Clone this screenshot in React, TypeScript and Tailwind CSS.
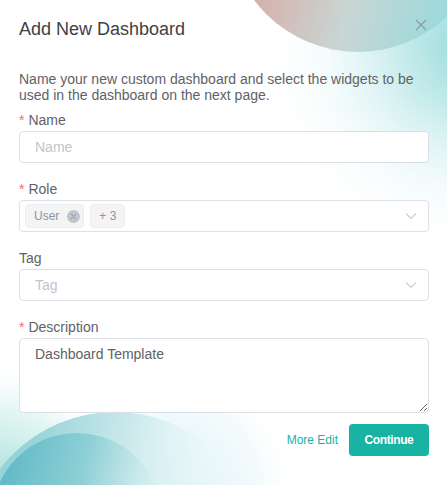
import React from "react";

function Chevron() {
  return (
    <svg width="12" height="12" viewBox="0 0 12 12" fill="none" className="shrink-0">
      <path d="M1 3.5 L6 8.5 L11 3.5" stroke="#c9cad6" strokeWidth="1.1" />
    </svg>
  );
}

function Label({ text, required }: { text: string; required?: boolean }) {
  return (
    <div className="h-[19px] text-[14px] leading-[19px] text-[#606266]">
      {required && <span className="text-[#f56c6c] mr-[4px]">*</span>}
      {text}
    </div>
  );
}

function Background() {
  return (
    <svg className="absolute inset-0" width="447" height="485" viewBox="0 0 447 485">
      <defs>
        <radialGradient id="glowR" gradientUnits="userSpaceOnUse" cx="470" cy="45" r="215">
          <stop offset="0" stopColor="#8fd8d8" stopOpacity="0.95" />
          <stop offset="0.3" stopColor="#b0e3e3" stopOpacity="0.75" />
          <stop offset="0.65" stopColor="#e2f5f6" stopOpacity="0.45" />
          <stop offset="1" stopColor="#ffffff" stopOpacity="0" />
        </radialGradient>
        <radialGradient id="glowL" gradientUnits="userSpaceOnUse" cx="0" cy="480" r="120">
          <stop offset="0" stopColor="#a8e2d8" stopOpacity="1" />
          <stop offset="0.6" stopColor="#d8f2ef" stopOpacity="0.7" />
          <stop offset="1" stopColor="#ffffff" stopOpacity="0" />
        </radialGradient>
        <radialGradient id="glowB" gradientUnits="userSpaceOnUse" cx="170" cy="490" r="130">
          <stop offset="0" stopColor="#d6f0f4" stopOpacity="0.9" />
          <stop offset="0.7" stopColor="#eff9fb" stopOpacity="0.7" />
          <stop offset="1" stopColor="#ffffff" stopOpacity="0" />
        </radialGradient>
        <linearGradient id="topC" gradientUnits="userSpaceOnUse" x1="262" y1="0" x2="430" y2="40">
          <stop offset="0" stopColor="#d6b3ae" />
          <stop offset="0.5" stopColor="#c8d6d4" />
          <stop offset="1" stopColor="#a0d9dc" />
        </linearGradient>
        <linearGradient id="botO" gradientUnits="userSpaceOnUse" x1="30" y1="430" x2="235" y2="470">
          <stop offset="0" stopColor="#94d3d8" />
          <stop offset="0.45" stopColor="#c6e7ea" stopOpacity="0.95" />
          <stop offset="0.8" stopColor="#e8f6f8" stopOpacity="0.5" />
          <stop offset="1" stopColor="#f4fbfc" stopOpacity="0" />
        </linearGradient>
        <linearGradient id="botI" gradientUnits="userSpaceOnUse" x1="10" y1="450" x2="160" y2="485">
          <stop offset="0" stopColor="#63bac8" />
          <stop offset="0.5" stopColor="#85ccd2" stopOpacity="0.8" />
          <stop offset="1" stopColor="#b8e2e6" stopOpacity="0" />
        </linearGradient>
      </defs>
      <rect width="447" height="485" fill="#ffffff" />
      <rect width="447" height="485" fill="url(#glowR)" />
      <rect width="447" height="485" fill="url(#glowL)" />
      <rect width="447" height="485" fill="url(#glowB)" />
      <circle cx="358" cy="-78" r="130" fill="url(#topC)" />
      <circle cx="115" cy="557" r="145" fill="url(#botO)" />
      <circle cx="77" cy="518" r="85" fill="url(#botI)" />
    </svg>
  );
}

export default function App() {
  return (
    <div
      className="relative w-[447px] h-[485px] overflow-hidden bg-white"
      style={{ fontFamily: '"Liberation Sans", Arial, sans-serif' }}
    >
      <Background />
      <button className="absolute left-[415px] top-[19px] w-[12px] h-[12px] flex items-center justify-center">
        <svg width="12" height="12" viewBox="0 0 12 12" fill="none">
          <path d="M1 1 L11 11 M11 1 L1 11" stroke="#8e9aa3" strokeWidth="1.1" />
        </svg>
      </button>
      <div className="relative flex w-[410px] flex-col ml-[19px] pt-[19px]">
        <h2 className="h-[21px] text-[18px] leading-[21px] font-normal text-[#3f4145]">Add New Dashboard</h2>
        <p className="mt-[31px] text-[14px] leading-[16px] text-[#606266]">
          Name your new custom dashboard and select the widgets to be used in the dashboard on the next page.
        </p>
        <div className="mt-[8px]">
          <Label text="Name" required />
          <div className="mt-[1px] h-[32px] rounded-[4px] border border-[#dcdfe6] bg-white flex items-center px-[15px] text-[14px] text-[#c0c4cc]">
            Name
          </div>
        </div>
        <div className="mt-[17px]">
          <Label text="Role" required />
          <div className="mt-[1px] h-[32px] rounded-[4px] border border-[#dcdfe6] bg-white flex items-center pl-[5px] pr-[11px]">
            <span className="flex h-[24px] items-center rounded-[4px] border border-[#ebedf0] bg-[#f4f4f5] pl-[8px] pr-[3px] text-[12px] text-[#909399]">
              User
              <span className="ml-[8px] flex h-[13px] w-[13px] items-center justify-center rounded-full bg-[#c0c4cc]">
                <svg width="7" height="7" viewBox="0 0 7 7" fill="none">
                  <path d="M1 1 L6 6 M6 1 L1 6" stroke="#909399" strokeWidth="0.9" />
                </svg>
              </span>
            </span>
            <span className="ml-[6px] flex h-[24px] items-center rounded-[4px] border border-[#ebedf0] bg-[#f4f4f5] px-[8px] text-[12px] text-[#909399]">
              + 3
            </span>
            <span className="ml-auto"><Chevron /></span>
          </div>
        </div>
        <div className="mt-[17px]">
          <Label text="Tag" />
          <div className="mt-[1px] h-[32px] rounded-[4px] border border-[#dcdfe6] bg-white flex items-center pl-[15px] pr-[11px] text-[14px] text-[#c0c4cc]">
            Tag
            <span className="ml-auto"><Chevron /></span>
          </div>
        </div>
        <div className="mt-[17px]">
          <Label text="Description" required />
          <textarea
            readOnly
            defaultValue="Dashboard Template"
            className="mt-[1px] block h-[75px] w-full rounded-[4px] border border-[#dcdfe6] bg-white px-[15px] py-[5px] text-[14px] leading-[21px] text-[#606266] outline-none"
          />
        </div>
        <div className="mt-[11px] flex items-center justify-end">
          <span className="text-[12px] font-normal text-[#18b3a3]">More Edit</span>
          <button className="ml-[11px] h-[32px] w-[80px] rounded-[4px] bg-[#18b3a3] text-[12px] font-bold tracking-[-0.4px] text-white">
            Continue
          </button>
        </div>
      </div>
    </div>
  );
}
